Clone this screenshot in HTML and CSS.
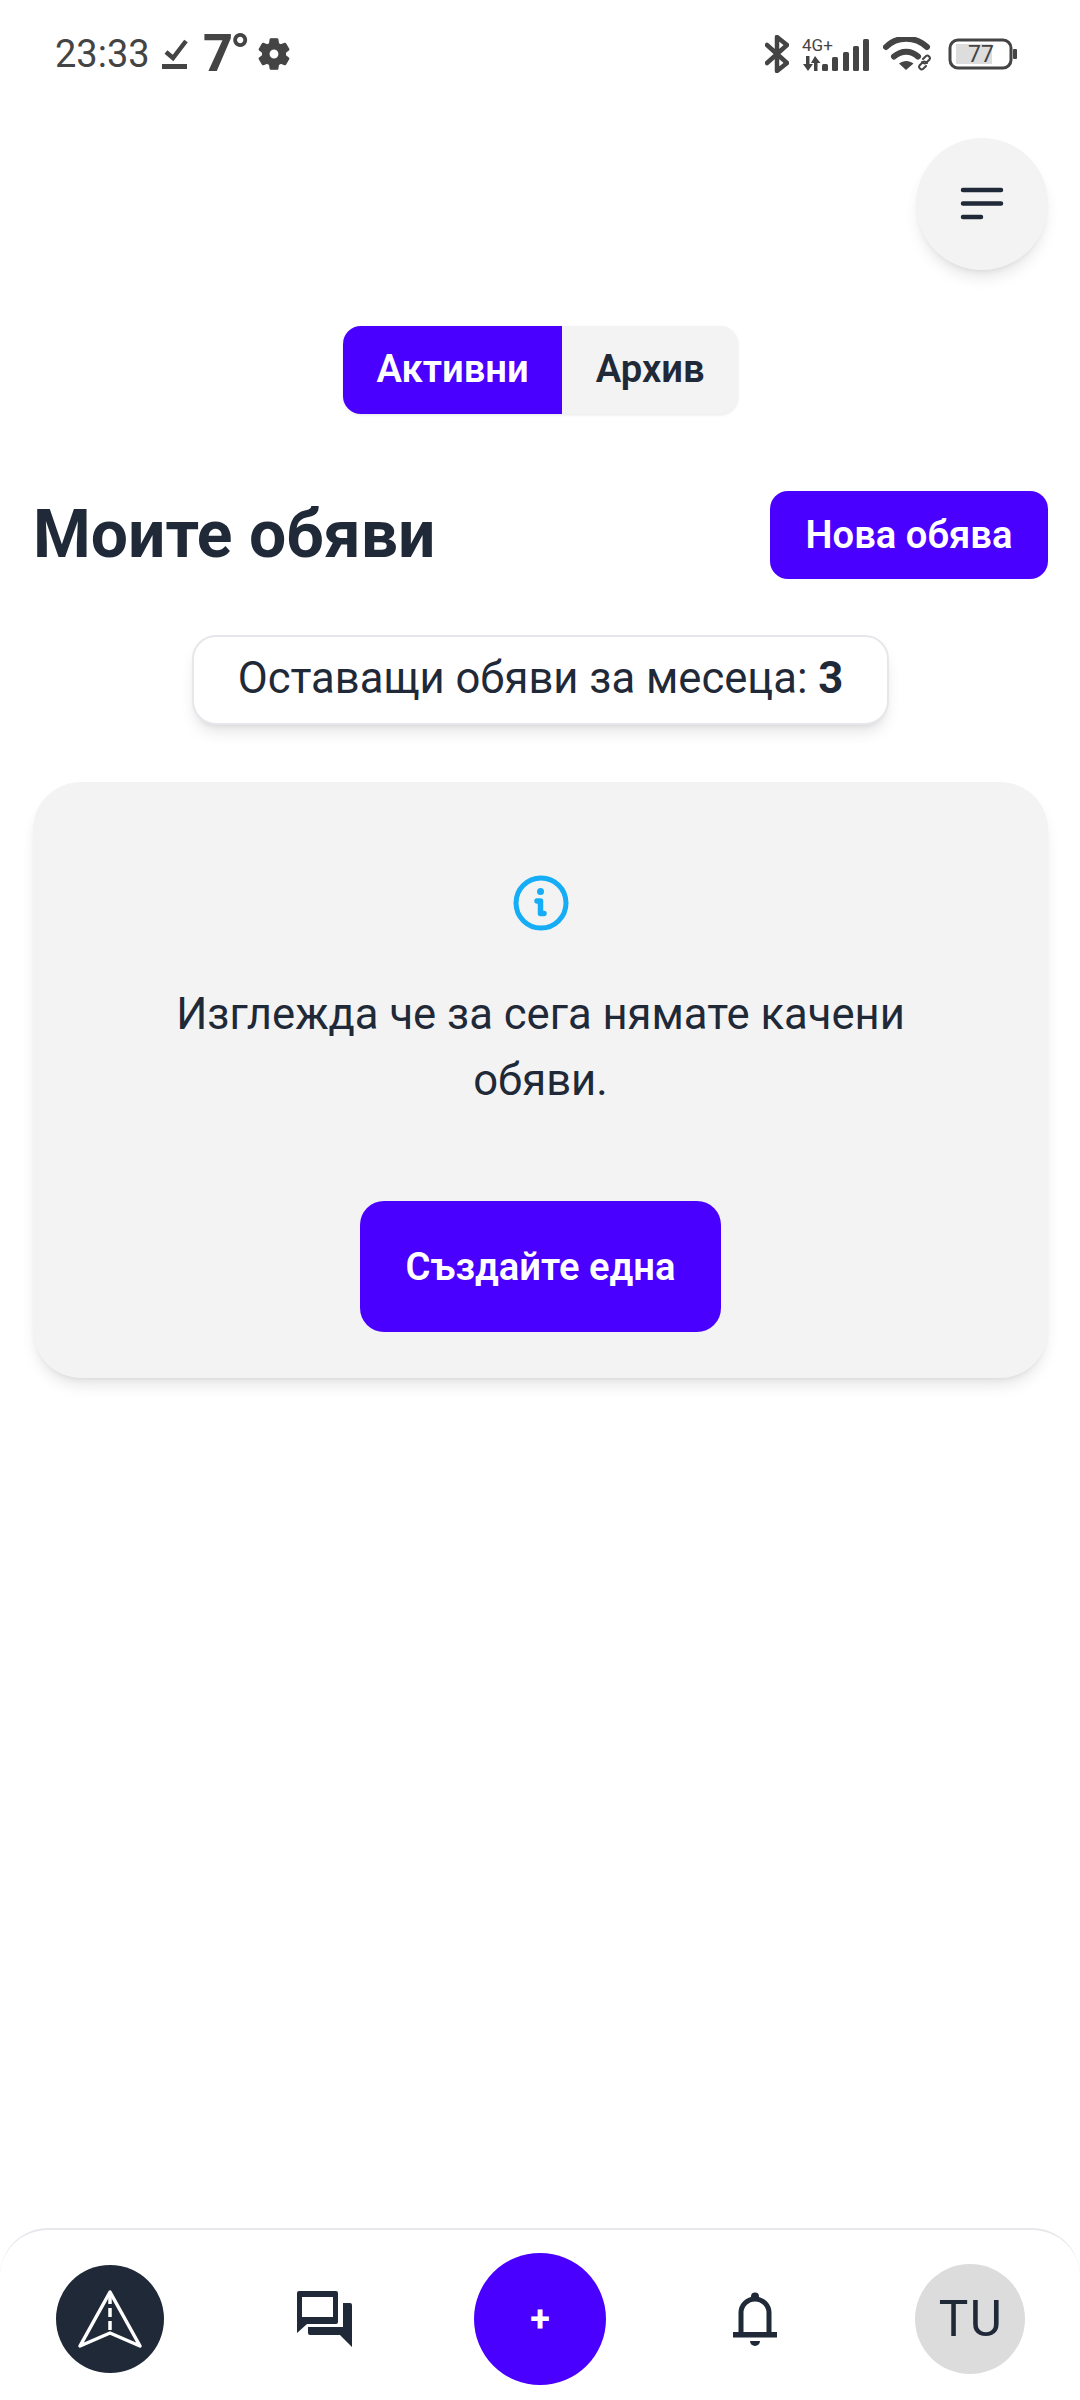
FILE: index.html
```html
<!DOCTYPE html>
<html lang="bg">
<head>
<meta charset="utf-8">
<title>Моите обяви</title>
<link rel="stylesheet" href="styles.css">
</head>
<body>
<div class="page">
  <header class="status">
    <div class="status-left">
      <span class="time">23:33</span>
      <svg class="ic-check" width="26" height="30" viewBox="0 0 26 30"><path d="M4 13l7 6L24 2" fill="none" stroke="#444" stroke-width="4.5"/><rect x="0" y="25" width="25" height="5" fill="#444"/></svg>
      <span class="temp">7°</span>
      <svg class="ic-gear" width="38" height="38" viewBox="0 0 24 24"><path fill="#444" stroke="#444" stroke-width=".8" d="M19.14 12.94c.04-.3.06-.61.06-.94 0-.32-.02-.64-.07-.94l2.03-1.58c.18-.14.23-.41.12-.61l-1.92-3.32c-.12-.22-.37-.29-.59-.22l-2.39.96c-.5-.38-1.03-.7-1.62-.94l-.36-2.54c-.04-.24-.24-.41-.48-.41h-3.84c-.24 0-.43.17-.47.41l-.36 2.54c-.59.24-1.13.57-1.62.94l-2.39-.96c-.22-.08-.47 0-.59.22L2.74 8.87c-.12.21-.08.47.12.61l2.03 1.58c-.05.3-.09.63-.09.94s.02.64.07.94l-2.03 1.58c-.18.14-.23.41-.12.61l1.92 3.32c.12.22.37.29.59.22l2.39-.96c.5.38 1.03.7 1.62.94l.36 2.54c.05.24.24.41.48.41h3.84c.24 0 .44-.17.47-.41l.36-2.54c.59-.24 1.13-.56 1.62-.94l2.39.96c.22.08.47 0 .59-.22l1.92-3.32c.12-.22.07-.47-.12-.61l-2.01-1.58zM12 15.2c-1.77 0-3.2-1.43-3.2-3.2s1.43-3.2 3.2-3.2 3.2 1.43 3.2 3.2-1.43 3.2-3.2 3.2z"/></svg>
    </div>
    <div class="status-right">
      <svg width="24" height="38" viewBox="0 0 24 38"><path d="M2 10l20 18-10 8V2l10 8L2 28" fill="none" stroke="#444" stroke-width="4.5" stroke-linejoin="round" stroke-linecap="round"/></svg>
      <svg class="ic-signal" width="68" height="50" viewBox="0 -8 68 50">
        <text x="0" y="14" class="net">4G+</text>
        <path fill="#444" d="M4 19h3.500v8H11l-5 7-5-7h3zM13 19l5.500 7h-3v8h-3.500v-8H9z"/>
        <rect x="20" y="27" width="6" height="7" rx="1.500" fill="#444"/>
        <rect x="30" y="20" width="6" height="14" rx="1.500" fill="#444"/>
        <rect x="41" y="15" width="6" height="19" rx="1.500" fill="#444"/>
        <rect x="51" y="9" width="6" height="25" rx="1.500" fill="#444"/>
        <rect x="61" y="2" width="6" height="32" rx="1.500" fill="#444"/>
      </svg>
      <svg class="ic-wifi" width="50" height="34" viewBox="0 0 50 34">
        <path d="M3 10C14-1 32-1 44 10M11 19.500c7.500-6.500 17-6.500 24 0" fill="none" stroke="#444" stroke-width="6" stroke-linecap="round"/>
        <path d="M16 26.500c4.500-3.500 10-3.500 14.500 0L23 33z" fill="#444"/>
        <g fill="none" stroke="#444" stroke-width="2" stroke-linecap="round"><path d="M40 22l3-3c2-1.500 5 1.500 3.500 3.500l-3 3c-1.500 1.500-3.500 1-4.500-.5"/><path d="M43 29l-3 3c-2 1.500-5-1.500-3.500-3.500l3-3c1.500-1.500 3.500-1 4.500.5"/></g>
      </svg>
      <svg class="ic-batt" width="70" height="32" viewBox="0 0 70 32">
        <rect x="2" y="2" width="61" height="28" rx="8" fill="none" stroke="#444" stroke-width="3"/>
        <rect x="8" y="6" width="36" height="20" fill="#ddd"/>
        <text x="33" y="24" class="batt" text-anchor="middle">77</text>
        <rect x="65" y="11" width="4" height="10" rx="1" fill="#444"/>
      </svg>
    </div>
  </header>

  <main class="main">
    <div class="menu-row">
      <button class="menu-btn" type="button" aria-label="Меню">
        <svg width="44" height="34" viewBox="0 0 44 34"><path d="M3 3h38M3 16.500h38M3 30h18" fill="none" stroke="#1f2937" stroke-width="4.500" stroke-linecap="round"/></svg>
      </button>
    </div>

    <div class="tabs-row">
      <div class="tabs">
        <span class="tab tab-active">Активни</span>
        <span class="tab">Архив</span>
      </div>
    </div>

    <div class="title-row">
      <h1 class="title">Моите обяви</h1>
      <a class="new-btn">Нова обява</a>
    </div>

    <div class="badge-row">
      <div class="badge">Оставащи обяви за месеца: <strong>3</strong></div>
    </div>

    <section class="card">
      <svg class="ic-info" width="56" height="56" viewBox="0 0 56 56">
        <circle cx="28" cy="28" r="25" fill="none" stroke="#14adf6" stroke-width="5"/>
        <circle cx="27.500" cy="16.500" r="3.500" fill="#14adf6"/>
        <path d="M24 26h3.500v12.500H31" fill="none" stroke="#14adf6" stroke-width="5.500" stroke-linecap="round" stroke-linejoin="round"/>
      </svg>
      <p class="card-text">Изглежда че за сега нямате качени обяви.</p>
      <a class="create-btn">Създайте една</a>
    </section>
  </main>

  <nav class="nav">
    <div class="nav-item">
      <div class="logo">
        <svg width="108" height="108" viewBox="0 0 108 108">
          <path d="M54 27L24 81l30-13 30 13z" fill="none" stroke="#fff" stroke-width="3.500" stroke-linejoin="round"/>
          <path d="M54 30v38" fill="none" stroke="#fff" stroke-width="3.500" stroke-dasharray="9 4"/>
        </svg>
      </div>
    </div>
    <div class="nav-item">
      <svg width="56" height="56" viewBox="0 0 56 56"><path fill="#1f2937" fill-rule="evenodd" d="M2 0h37a2 2 0 0 1 2 2v29a2 2 0 0 1-2 2H10l-10 9V2a2 2 0 0 1 2-2zM5 6v20h31V6zM46 12h7a2 2 0 0 1 2 2v42L43 44H13a2 2 0 0 1-2-2v-6h35z"/></svg>
    </div>
    <div class="nav-item">
      <a class="fab">+</a>
    </div>
    <div class="nav-item">
      <svg width="44" height="55" viewBox="0 0 44 55">
        <circle cx="22" cy="4.500" r="4" fill="#1f2937"/>
        <path d="M8 41V21a14 14 0 0 1 28 0v20" fill="none" stroke="#1f2937" stroke-width="5"/>
        <rect x="0" y="40" width="44" height="5.500" fill="#1f2937"/>
        <path d="M17 49h10a5 5 0 0 1-10 0z" fill="#1f2937"/>
      </svg>
    </div>
    <div class="nav-item">
      <div class="avatar">TU</div>
    </div>
  </nav>
</div>
</body>
</html>
```

FILE: styles.css
```css
* { box-sizing: border-box; }

html, body {
  margin: 0;
  padding: 0;
  background: #fff;
}

body {
  font-family: Roboto, "Noto Sans", sans-serif;
  color: #1f2937;
}

.page {
  width: 1080px;
  height: 2400px;
  display: flex;
  flex-direction: column;
  overflow: hidden;
}

/* Status bar */
.status {
  height: 108px;
  flex: none;
  padding: 0 62px 0 55px;
  display: flex;
  justify-content: space-between;
  align-items: center;
  color: #444;
}

.status-left,
.status-right {
  display: flex;
  align-items: center;
}

.time {
  font-size: 38px;
  line-height: 44px;
  width: 91px;
}

.ic-check { margin-left: 16px; }

.temp {
  font-size: 52px;
  font-weight: 800;
  line-height: 56px;
  margin-left: 15px;
  width: 44px;
  letter-spacing: -3px;
}

.ic-gear { margin-left: 8px; }

.ic-signal { margin-left: 13px; }
.ic-wifi { margin-left: 13px; }
.ic-batt { margin-left: 15px; }

.net {
  font-family: Roboto, sans-serif;
  font-size: 17px;
  fill: #444;
}

.batt {
  font-family: Roboto, sans-serif;
  font-size: 23px;
  fill: #444;
}

/* Main column */
.main {
  flex: 1;
  padding: 30px 32px 0 33px;
  display: flex;
  flex-direction: column;
}

.menu-row {
  display: flex;
  justify-content: flex-end;
}

.menu-btn {
  width: 132px;
  height: 132px;
  border: 0;
  border-radius: 50%;
  background: #f3f3f4;
  box-shadow: 0 10px 15px -3px rgba(0, 0, 0, .1), 0 4px 6px -4px rgba(0, 0, 0, .1);
  display: flex;
  align-items: center;
  justify-content: center;
  padding: 0;
}

.tabs-row {
  display: flex;
  justify-content: center;
  margin-top: 56px;
}

.tabs {
  display: flex;
  height: 88px;
  border-radius: 18px;
  overflow: hidden;
  background: #f3f3f4;
  box-shadow: 0 1px 3px rgba(0, 0, 0, .1);
}

.tab {
  display: flex;
  align-items: center;
  padding: 0 33.5px 2px;
  font-size: 38.2px;
  font-weight: 600;
}

.tab-active {
  background: #4a00ff;
  color: #fff;
}

.title-row {
  margin-top: 77px;
  display: flex;
  justify-content: space-between;
  align-items: center;
}

.title {
  margin: 0;
  font-size: 66px;
  line-height: 88px;
  font-weight: 700;
}

.new-btn {
  height: 88px;
  padding: 0 35.5px;
  display: flex;
  align-items: center;
  background: #4a00ff;
  color: #fff;
  font-size: 38.2px;
  font-weight: 600;
  border-radius: 18px;
}

.badge-row {
  display: flex;
  justify-content: center;
  margin-top: 56px;
}

.badge {
  height: 90px;
  padding: 0 44px;
  line-height: 84px;
  background: #fff;
  border: 2px solid #e5e7eb;
  border-radius: 24px;
  font-size: 43.6px;
  box-shadow: 0 10px 15px -3px rgba(0, 0, 0, .1), 0 4px 6px -4px rgba(0, 0, 0, .1);
}

.badge strong { font-weight: 700; }

.card {
  margin-top: 57px;
  height: 596px;
  padding: 93px 100px 46px;
  background: #f3f3f4;
  border-radius: 48px;
  box-shadow: 0 10px 15px -3px rgba(0, 0, 0, .1), 0 4px 6px -4px rgba(0, 0, 0, .1);
  display: flex;
  flex-direction: column;
  align-items: center;
}

.ic-info { flex: none; }

.card-text {
  margin: 51px 0 0;
  font-size: 43.6px;
  line-height: 66px;
  text-align: center;
}

.create-btn {
  margin-top: 87px;
  width: 361px;
  height: 133px;
  display: flex;
  align-items: center;
  justify-content: center;
  background: #4a00ff;
  color: #fff;
  font-size: 38.2px;
  font-weight: 600;
  border-radius: 24px;
}

/* Bottom navigation */
.nav {
  flex: none;
  height: 172px;
  padding: 8px 3px 0;
  display: grid;
  grid-template-columns: repeat(5, 1fr);
  align-items: center;
  background: #fff;
  border-top: 2px solid #e5e7eb;
  border-radius: 48px 48px 0 0;
}

.nav-item {
  display: flex;
  justify-content: center;
  align-items: center;
}

.logo {
  width: 108px;
  height: 108px;
  border-radius: 50%;
  background: #1f2937;
}

.logo svg { display: block; }

.fab {
  width: 132px;
  height: 132px;
  border-radius: 50%;
  background: #4a00ff;
  color: #fff;
  font-size: 36px;
  font-weight: 700;
  display: flex;
  align-items: center;
  justify-content: center;
}

.avatar {
  width: 110px;
  height: 110px;
  padding-left: 3px;
  border-radius: 50%;
  background: #dcdcdc;
  font-size: 49.5px;
  letter-spacing: 1.5px;
  display: flex;
  align-items: center;
  justify-content: center;
}
```
